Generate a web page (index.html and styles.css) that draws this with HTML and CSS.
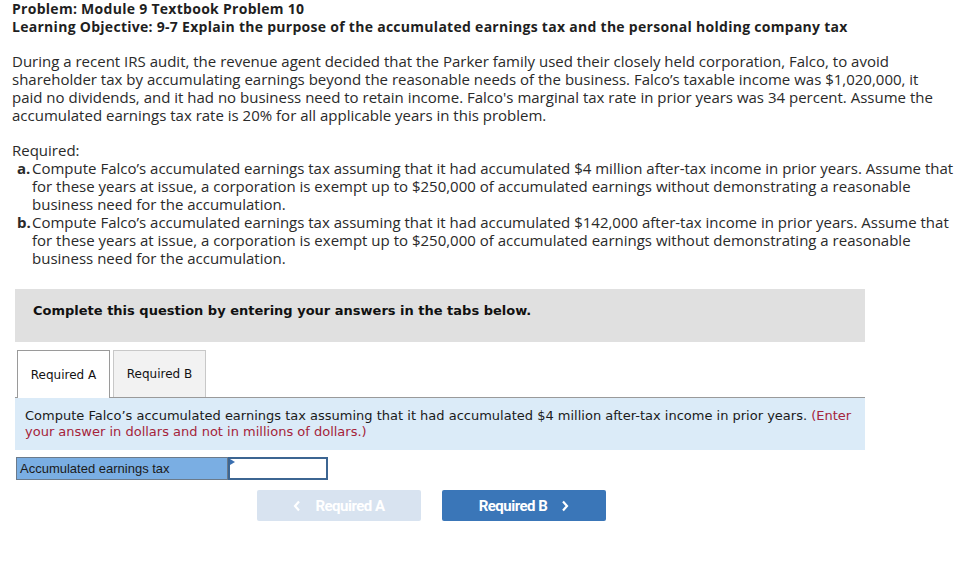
FILE: index.html
```html
<!DOCTYPE html>
<html>
<head>
<meta charset="utf-8">
<link rel="stylesheet" href="styles.css">
</head>
<body>
<div class="problem">
  <div class="titles">
    <div>Problem: Module 9 Textbook Problem 10</div>
    <div>Learning Objective: 9-7 Explain the purpose of the accumulated earnings tax and the personal holding company tax</div>
  </div>
  <p class="intro">During a recent IRS audit, the revenue agent decided that the Parker family used their closely held corporation, Falco, to avoid shareholder tax by accumulating earnings beyond the reasonable needs of the business. Falco’s taxable income was $1,020,000, it paid no dividends, and it had no business need to retain income. Falco's marginal tax rate in prior years was 34 percent. Assume the accumulated earnings tax rate is 20% for all applicable years in this problem.</p>
  <div class="required">
    <div>Required:</div>
    <div class="item"><span class="mark">a.</span><span>Compute Falco’s accumulated earnings tax assuming that it had accumulated $4 million after-tax income in prior years. Assume that for these years at issue, a corporation is exempt up to $250,000 of accumulated earnings without demonstrating a reasonable business need for the accumulation.</span></div>
    <div class="item"><span class="mark">b.</span><span>Compute Falco’s accumulated earnings tax assuming that it had accumulated $142,000 after-tax income in prior years. Assume that for these years at issue, a corporation is exempt up to $250,000 of accumulated earnings without demonstrating a reasonable business need for the accumulation.</span></div>
  </div>
</div>
<div class="work">
  <div class="notice">Complete this question by entering your answers in the tabs below.</div>
  <div class="tabs">
    <div class="tab active">Required A</div>
    <div class="tab">Required B</div>
  </div>
  <div class="panel"><p class="task">Compute Falco’s accumulated earnings tax assuming that it had accumulated $4 million after-tax income in prior years. <span class="hint">(Enter your answer in dollars and not in millions of dollars.)</span></p></div>
  <div class="answer">
    <div class="label">Accumulated earnings tax</div>
    <div class="input"><span class="flag"></span></div>
  </div>
  <div class="nav">
    <div class="btn prev"><svg class="chev" width="8" height="12" viewBox="0 0 8 12"><path d="M6 1.5 L2 6 L6 10.5" fill="none" stroke="currentColor" stroke-width="2.2"/></svg>Required A</div>
    <div class="btn next">Required B<svg class="chev" width="8" height="12" viewBox="0 0 8 12"><path d="M2 1.5 L6 6 L2 10.5" fill="none" stroke="currentColor" stroke-width="2.2"/></svg></div>
  </div>
</div>
</body>
</html>
```
FILE: styles.css
```css
body {
  margin: 0;
  font-family: "Open Sans", "Liberation Sans", sans-serif;
  color: #2a2a2a;
  background: #fff;
}
.problem {
  padding: 0 10px 0 12px;
  font-size: 15px;
  line-height: 18px;
}
.titles {
  font-weight: bold;
  font-size: 14px;
  letter-spacing: 0.28px;
  color: #1f1f1f;
}
.intro {
  margin: 16px 0 0;
  width: 930px;
}
.required {
  margin-top: 17px;
}
.item {
  display: flex;
  padding-left: 5px;
}
.mark {
  font-weight: bold;
  width: 15px;
  flex: none;
}
.work {
  margin: 22px 0 0 15px;
  width: 850px;
  font-family: "DejaVu Sans", Verdana, sans-serif;
}
.notice {
  background: #e0e0e0;
  height: 53px;
  box-sizing: border-box;
  padding: 14px 18px;
  font-weight: bold;
  font-size: 13px;
  color: #111;
}
.tabs {
  display: flex;
  gap: 3px;
  margin-top: 8px;
  padding-left: 2px;
  border-bottom: 1px solid #9a9a9a;
  height: 47px;
}
.tab {
  width: 93px;
  box-sizing: border-box;
  border: 1px solid #c8c8c8;
  border-bottom: none;
  background: #f2f2f2;
  font-size: 12px;
  color: #111;
  display: flex;
  align-items: center;
  justify-content: center;
}
.tab.active {
  background: #fff;
  border-color: #9a9a9a;
  height: 48px;
}
.panel {
  background: #dbebf8;
  padding: 10px 10px 10px;
  font-size: 13px;
  line-height: 16px;
  color: #1a1a1a;
}
.task {
  margin: 0;
}
.hint {
  color: #a5243a;
}
.answer {
  display: flex;
  margin-top: 7px;
  height: 23px;
  font-family: "Liberation Sans", Arial, sans-serif;
}
.label {
  width: 212px;
  box-sizing: border-box;
  background: #7aaee3;
  border: 1px solid #6b7a8a;
  font-size: 13px;
  padding: 3px 3px;
  color: #1a1a1a;
  margin-left: 1px;
}
.input {
  position: relative;
  width: 100px;
  box-sizing: border-box;
  border: 2px solid #3c6592;
  background: #fff;
}
.flag {
  position: absolute;
  left: 0;
  top: 0;
  width: 0;
  height: 0;
  border-top: 3px solid transparent;
  border-bottom: 3px solid transparent;
  border-left: 5px solid #3a6fb0;
}
.nav {
  display: flex;
  gap: 21px;
  margin: 10px 0 0 242px;
  font-family: "Roboto", "Liberation Sans", sans-serif;
}
.btn {
  width: 164px;
  height: 31px;
  border-radius: 2px;
  color: #fff;
  font-weight: bold;
  font-size: 15px;
  letter-spacing: -0.5px;
  display: flex;
  align-items: center;
  justify-content: center;
  gap: 14px;
}
.prev {
  background: #d8e3f0;
}
.next {
  background: #3a76b8;
}
.chev {
  display: block;
}
```
